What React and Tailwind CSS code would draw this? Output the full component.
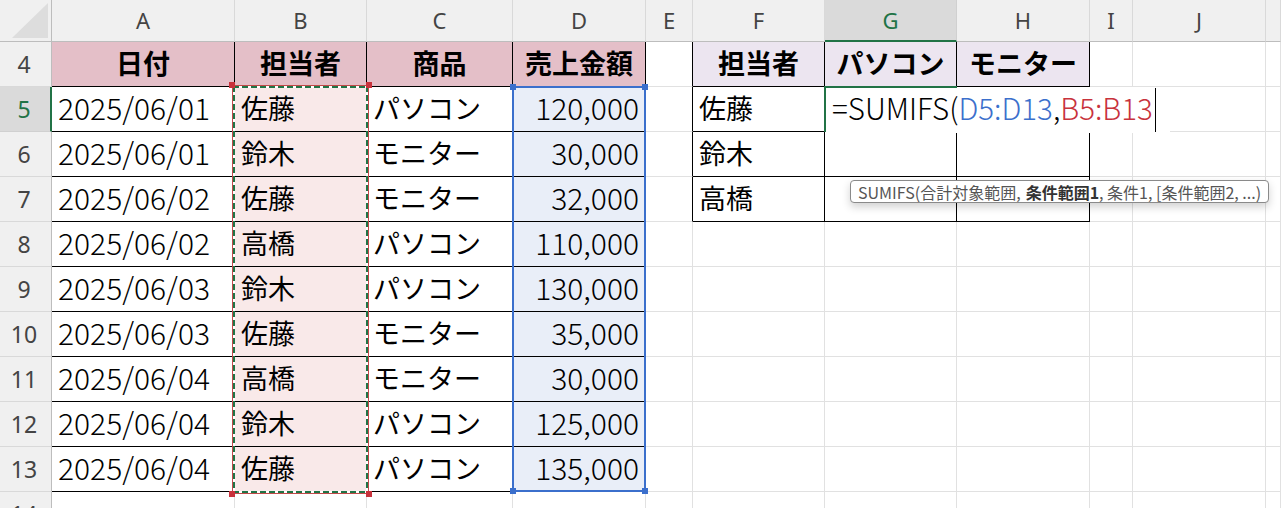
import React from 'react';

const COLS = ['A', 'B', 'C', 'D', 'E', 'F', 'G', 'H', 'I', 'J', 'K'];
const ROWS = [4, 5, 6, 7, 8, 9, 10, 11, 12, 13, 14];

const sales = [
  ['2025/06/01', '佐藤', 'パソコン', '120,000'],
  ['2025/06/01', '鈴木', 'モニター', '30,000'],
  ['2025/06/02', '佐藤', 'モニター', '32,000'],
  ['2025/06/02', '高橋', 'パソコン', '110,000'],
  ['2025/06/03', '鈴木', 'パソコン', '130,000'],
  ['2025/06/03', '佐藤', 'モニター', '35,000'],
  ['2025/06/04', '高橋', 'モニター', '30,000'],
  ['2025/06/04', '鈴木', 'パソコン', '125,000'],
  ['2025/06/04', '佐藤', 'パソコン', '135,000'],
];

const people = ['佐藤', '鈴木', '高橋'];

const gridCols = 'grid grid-cols-[52px_183px_132px_146px_133px_47px_132px_132px_133px_43px_133px_1fr] grid-rows-[42px_repeat(11,45px)]';

// what sits in each cell of the sheet
function cellInfo(r, c) {
  const ci = COLS.indexOf(c);
  const inMain = r >= 4 && r <= 13 && ci <= 3;
  const inSub = r >= 4 && r <= 7 && ci >= 5 && ci <= 7;
  let text = '';
  let align = 'left';
  let bold = false;
  let latin = false;
  let bg = 'bg-white';

  if (r === 4 && inMain) {
    text = ['日付', '担当者', '商品', '売上金額'][ci];
    align = 'center';
    bold = true;
    bg = 'bg-[#e4bfc8]';
  } else if (inMain) {
    text = sales[r - 5][ci];
    if (ci === 0 || ci === 3) latin = true;
    if (ci === 3) align = 'right';
    if (ci === 1) bg = 'bg-[#f9e9e9]';
    if (ci === 3) bg = 'bg-[#e9eef8]';
  }
  if (r === 4 && inSub) {
    text = ['担当者', 'パソコン', 'モニター'][ci - 5];
    align = 'center';
    bold = true;
    bg = 'bg-[#ece5f0]';
  } else if (inSub && c === 'F') {
    text = people[r - 5];
  }

  const blackRight = inMain || inSub || (c === 'E' && r >= 4 && r <= 7);
  const blackBottom = inMain || inSub;
  return { text, align, bold, latin, bg, blackRight, blackBottom };
}

function Cell({ r, c }) {
  const { text, align, bold, latin, bg, blackRight, blackBottom } = cellInfo(r, c);
  const justify = align === 'center' ? 'justify-center' : align === 'right' ? 'justify-end' : 'justify-start';
  return (
    <div
      className={`flex items-center px-[6px] pb-[4px] border-r border-b whitespace-nowrap leading-none text-black ${bg} ${justify} ${
        blackRight ? 'border-r-black' : 'border-r-[#e1e1e1]'
      } ${blackBottom ? 'border-b-black' : 'border-b-[#e1e1e1]'} ${bold ? 'font-bold' : latin ? 'font-light' : 'font-normal'} ${
        latin ? 'text-[30px]' : 'text-[27px]'
      }`}
    >
      {text}
    </div>
  );
}

function Handle({ className }) {
  return <div className={`absolute w-[6px] h-[6px] ${className}`} />;
}

export default function App() {
  return (
    <div className="relative w-[1281px] h-[508px] overflow-hidden bg-white font-['Noto_Sans_CJK_JP',sans-serif]">
      <div className="grid">
        {/* sheet cells */}
        <div className={`col-start-1 row-start-1 ${gridCols}`}>
          <div className="bg-[#f0f0f0] border-r border-b border-r-[#bdbdbd] border-b-[#bdbdbd]">
            <svg width="52" height="42" viewBox="0 0 52 42">
              <polygon points="48,3 48,38 12,38" fill="#dddddd" />
            </svg>
          </div>

          {COLS.map((c) =>
            c === 'G' ? (
              <div
                key={c}
                className="flex items-center justify-center bg-[#dadada] border-r border-r-[#d0d0d0] border-b-2 border-b-[#217346] text-[22px] text-[#217346] font-['Noto_Sans',sans-serif]"
              >
                {c}
              </div>
            ) : (
              <div
                key={c}
                className="flex items-center justify-center bg-[#f0f0f0] border-r border-r-[#d9d9d9] border-b border-b-[#bdbdbd] text-[22px] text-[#444] font-['Noto_Sans',sans-serif]"
              >
                {c === 'K' ? '' : c}
              </div>
            )
          )}

          {ROWS.map((r) => (
            <React.Fragment key={r}>
              {r === 5 ? (
                <div className="flex items-center justify-center pr-[2px] bg-[#dadada] border-r-2 border-r-[#217346] border-b border-b-[#d0d0d0] text-[23px] text-[#217346] font-['Noto_Sans',sans-serif]">
                  {r}
                </div>
              ) : (
                <div className="flex items-center justify-center pr-[3px] bg-[#f0f0f0] border-r border-r-[#bdbdbd] border-b border-b-[#d9d9d9] text-[23px] text-[#444] font-['Noto_Sans',sans-serif]">
                  {r}
                </div>
              )}
              {COLS.map((c) => (
                <Cell key={c} r={r} c={c} />
              ))}
            </React.Fragment>
          ))}
        </div>

        {/* selection layer */}
        <div className={`col-start-1 row-start-1 pointer-events-none ${gridCols}`}>
          {/* B5:B13 criteria range: marching ants */}
          <div className="col-start-3 col-end-4 row-start-3 row-end-12 -ml-[2px] -mt-[1px] -mr-[1px] -mb-[1px] relative outline outline-1 outline-[#c24a4a]">
            <div className="absolute left-0 right-0 top-0 h-[2px] bg-[repeating-linear-gradient(90deg,#217346_0_6px,#ffffff_6px_9px)]" />
            <div className="absolute left-0 right-0 bottom-0 h-[2px] bg-[repeating-linear-gradient(90deg,#217346_0_6px,#ffffff_6px_9px)]" />
            <div className="absolute top-0 bottom-0 left-0 w-[2px] bg-[repeating-linear-gradient(180deg,#217346_0_6px,#ffffff_6px_9px)]" />
            <div className="absolute top-0 bottom-0 right-0 w-[2px] bg-[repeating-linear-gradient(180deg,#217346_0_6px,#ffffff_6px_9px)]" />
            <Handle className="-left-[4px] -top-[4px] bg-[#c8323c]" />
            <Handle className="-right-[4px] -top-[4px] bg-[#c8323c]" />
            <Handle className="-left-[4px] -bottom-[4px] bg-[#c8323c]" />
            <Handle className="-right-[4px] -bottom-[4px] bg-[#c8323c]" />
          </div>

          {/* D5:D13 sum range */}
          <div className="col-start-5 col-end-6 row-start-3 row-end-12 -ml-[1px] -mt-[1px] relative border-2 border-[#3b6fcc]">
            <Handle className="-left-[4px] -top-[4px] bg-[#3b6fcc]" />
            <Handle className="-right-[4px] -top-[4px] bg-[#3b6fcc]" />
            <Handle className="-left-[4px] -bottom-[4px] bg-[#3b6fcc]" />
            <Handle className="-right-[4px] -bottom-[4px] bg-[#3b6fcc]" />
          </div>

          {/* in-cell editor on G5 */}
          <div className="col-start-8 row-start-3 self-start justify-self-start w-[345px] h-[46px] pb-[4px] bg-white flex items-center pl-[7px] text-[29.5px] font-light leading-none whitespace-nowrap">
            <span className="text-black">=SUMIFS(</span>
            <span className="text-[#3b6fcc]">D5:D13</span>
            <span className="text-black">,</span>
            <span className="text-[#c8323c]">B5:B13</span>
            <span className="ml-[2px] mt-[4px] w-px h-[44px] bg-black" />
          </div>
          <div className="col-start-8 row-start-3 -mt-[1px] -ml-[1px] border-t-2 border-l-2 border-[#217346]" />
        </div>
      </div>

      {/* function argument tooltip */}
      <div className="absolute left-[850px] top-[180px] z-40 h-[23px] px-[7px] flex items-center rounded-[4px] border border-[#8a8a8a] bg-white shadow-[0_4px_8px_rgba(0,0,0,0.18)] text-[16px] leading-none text-[#555] whitespace-nowrap">
        <span>SUMIFS(合計対象範囲,</span>
        <span className="font-bold text-[#333] ml-[5px]">条件範囲1</span>
        <span>, 条件1, [条件範囲2, ...)</span>
      </div>
    </div>
  );
}
